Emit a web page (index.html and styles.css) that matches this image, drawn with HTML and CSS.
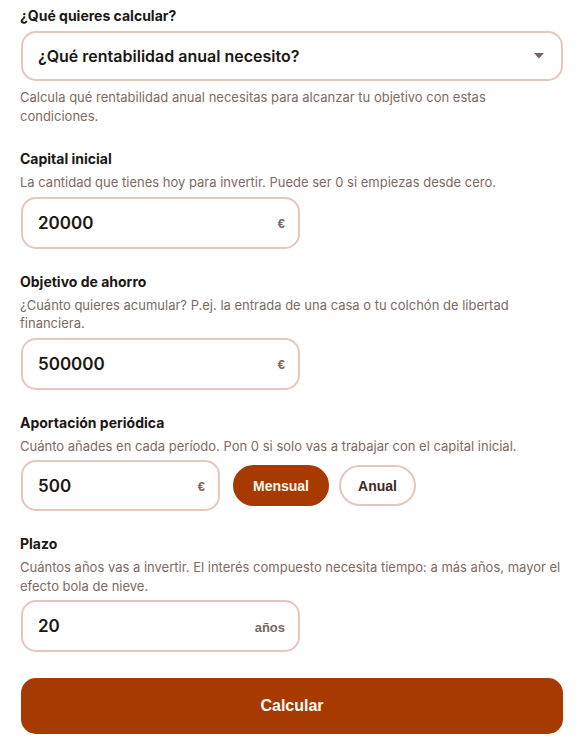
FILE: index.html
```html
<!DOCTYPE html>
<html lang="es">
<head>
<meta charset="utf-8">
<title>Calculadora</title>
<link rel="stylesheet" href="styles.css">
</head>
<body>
<form class="form">
  <div class="field field-first">
    <label class="label">¿Qué quieres calcular?</label>
    <div class="select">
      <span class="select-text">¿Qué rentabilidad anual necesito?</span>
      <svg class="caret" width="10" height="6" viewBox="0 0 10 6"><path d="M0 0 L10 0 L5 5.5 Z" fill="#7a6660"/></svg>
    </div>
    <p class="help help-after">Calcula qué rentabilidad anual necesitas para alcanzar tu objetivo con estas condiciones.</p>
  </div>

  <div class="field">
    <label class="label">Capital inicial</label>
    <p class="help">La cantidad que tienes hoy para invertir. Puede ser 0 si empiezas desde cero.</p>
    <div class="input">
      <span class="value">20000</span>
      <span class="unit">€</span>
    </div>
  </div>

  <div class="field">
    <label class="label">Objetivo de ahorro</label>
    <p class="help">¿Cuánto quieres acumular? P.ej. la entrada de una casa o tu colchón de libertad financiera.</p>
    <div class="input">
      <span class="value">500000</span>
      <span class="unit">€</span>
    </div>
  </div>

  <div class="field">
    <label class="label">Aportación periódica</label>
    <p class="help">Cuánto añades en cada período. Pon 0 si solo vas a trabajar con el capital inicial.</p>
    <div class="row">
      <div class="input input-small">
        <span class="value">500</span>
        <span class="unit">€</span>
      </div>
      <button type="button" class="pill pill-active">Mensual</button>
      <button type="button" class="pill">Anual</button>
    </div>
  </div>

  <div class="field">
    <label class="label">Plazo</label>
    <p class="help">Cuántos años vas a invertir. El interés compuesto necesita tiempo: a más años, mayor el efecto bola de nieve.</p>
    <div class="input">
      <span class="value">20</span>
      <span class="unit">años</span>
    </div>
  </div>

  <button type="button" class="submit">Calcular</button>
</form>
</body>
</html>
```

FILE: styles.css
```css
* { box-sizing: border-box; }
html, body { margin: 0; padding: 0; background: #ffffff; }
body {
  font-family: Inter, "Noto Sans", sans-serif;
  color: #1c1714;
}
.form {
  width: 543px;
  margin-left: 20px;
  padding-top: 7px;
  display: flex;
  flex-direction: column;
}
.field {
  display: flex;
  flex-direction: column;
  margin-bottom: 24px;
}
.label {
  display: block;
  font-size: 14px;
  line-height: 18px;
  font-weight: 700;
  color: #1c1714;
}
.help {
  margin: 5px 0 5px;
  font-size: 13px;
  line-height: 18.5px;
  font-weight: 400;
  color: #7d6a62;
}
.help-after {
  margin: 7px 0 0;
  padding-right: 20px;
}
.select {
  margin-top: 6px;
  margin-left: 1px;
  height: 50px;
  border: 2px solid #e5c7bc;
  border-radius: 15px;
  display: flex;
  align-items: center;
  justify-content: space-between;
  padding: 0 17px 0 15px;
}
.select-text {
  font-size: 16px;
  font-weight: 600;
  color: #1c1714;
}
.caret { display: block; }
.field-first { margin-bottom: 25px; }
.input {
  margin-left: 1px;
  width: 279px;
  height: 52px;
  border: 2px solid #e5c7bc;
  border-radius: 15px;
  display: flex;
  align-items: center;
  justify-content: space-between;
  padding: 0 13px 0 15px;
  background: #fff;
}
.value {
  font-size: 17px;
  font-weight: 600;
  color: #1c1714;
}
.unit {
  font-family: "Liberation Sans", Arial, sans-serif;
  font-size: 13px;
  font-weight: 700;
  color: #7a6660;
  padding-top: 2px;
}
.row {
  display: flex;
  align-items: center;
}
.input-small { width: 199px; height: 51px; margin-right: 13px; }
.pill {
  font-family: "Liberation Sans", Arial, sans-serif;
  font-size: 14px;
  font-weight: 700;
  height: 41px;
  border-radius: 21px;
  border: 2px solid #e5c7bc;
  background: #fff;
  color: #3b2b25;
  padding: 0;
  margin-right: 10px;
}
.pill-active {
  width: 96px;
  background: #a63a00;
  border-color: #a63a00;
  color: #fff6e8;
}
.pill:not(.pill-active) { width: 77px; }
.submit {
  margin-top: 2px;
  margin-left: 1px;
  height: 56px;
  border: none;
  border-radius: 15px;
  background: #a63a00;
  color: #fffaf2;
  font-family: "Liberation Sans", Arial, sans-serif;
  font-size: 16px;
  font-weight: 700;
}
```
